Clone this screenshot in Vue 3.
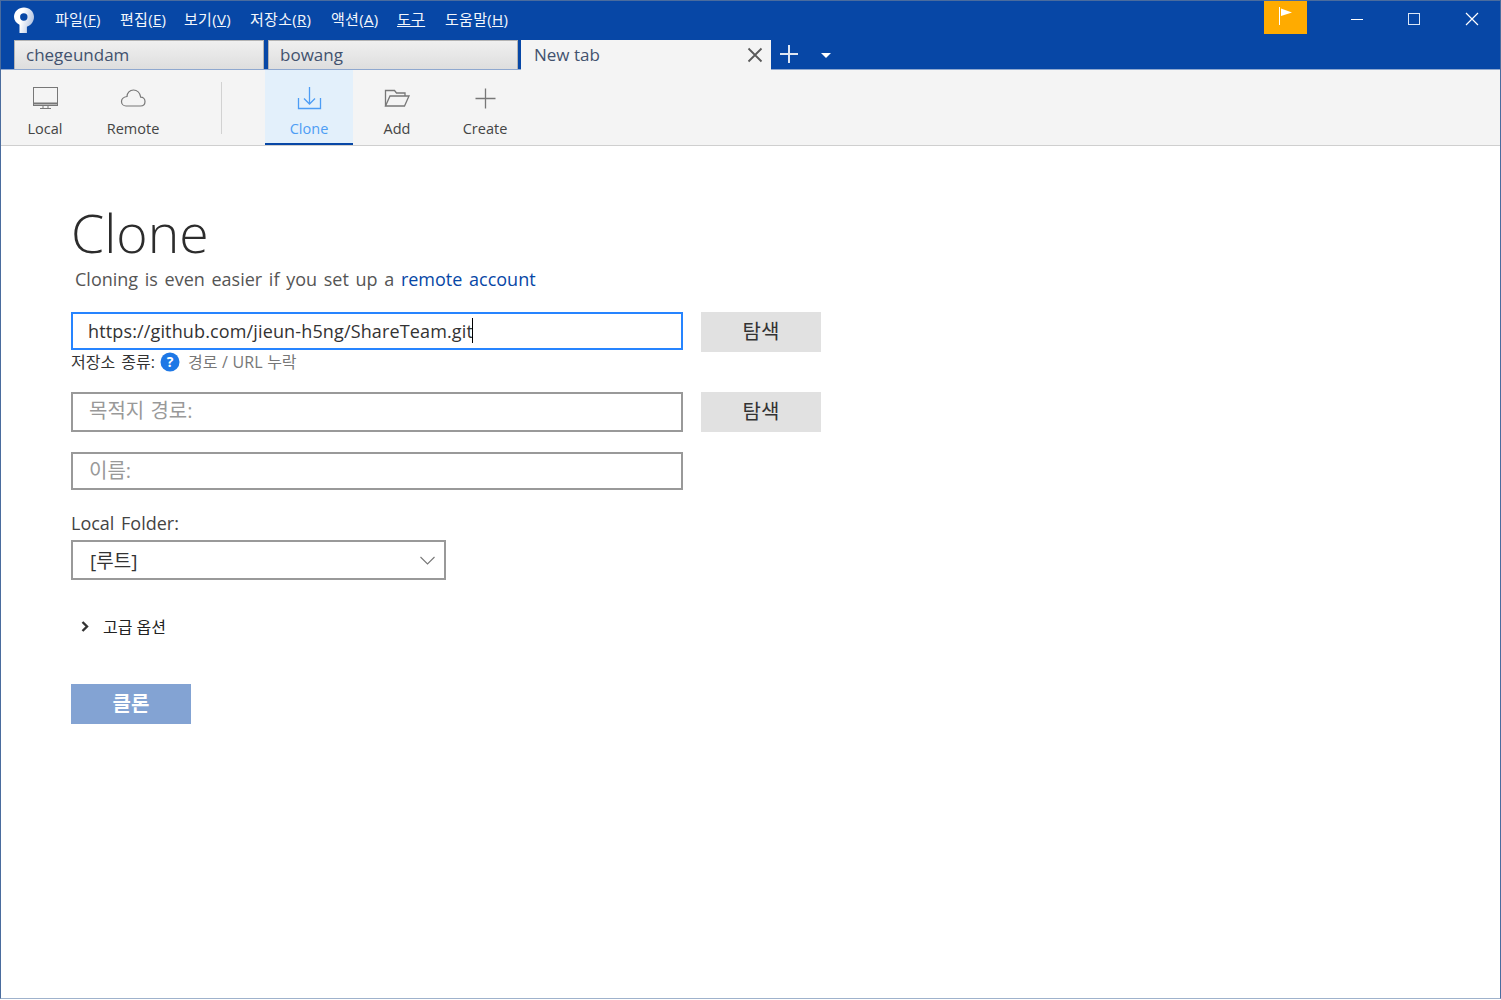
<script setup>
const menus = [
  { label: '파일', key: 'F', width: 65 },
  { label: '편집', key: 'E', width: 64 },
  { label: '보기', key: 'V', width: 66 },
  { label: '저장소', key: 'R', width: 81 },
  { label: '액션', key: 'A', width: 66 },
  { label: '도구', key: '', width: 48 },
  { label: '도움말', key: 'H', width: 70 }
]
</script>

<template>
  <div class="window">
    <header class="titlebar">
      <svg class="logo" width="22" height="26" viewBox="0 0 22 26">
        <defs>
          <linearGradient id="lg" x1="0" y1="0" x2="1" y2="0.3">
            <stop offset="0.45" stop-color="#ffffff" />
            <stop offset="1" stop-color="#b9c9e4" />
          </linearGradient>
        </defs>
        <path fill="url(#lg)" fill-rule="evenodd" d="M11 0.5C5.4 0.5 1 4.6 1 9.8c0 3.5 2.2 6.4 5.5 8V26h7.4v-6.2c4.2-1.5 7.1-5.3 7.1-10C21 4.6 16.6 0.5 11 0.5zM10.8 6.3a3.7 3.7 0 1 1 0 7.4a3.7 3.7 0 0 1 0-7.4z" />
      </svg>
      <nav class="menu">
        <span v-for="m in menus" :key="m.label" class="menu-item" :style="{ width: m.width + 'px' }">
          <template v-if="m.key">{{ m.label }}(<u>{{ m.key }}</u>)</template>
          <u v-else>{{ m.label }}</u>
        </span>
      </nav>
      <div class="flag">
        <svg width="14" height="18" viewBox="0 0 14 18">
          <path d="M0.5 0v18" stroke="#fff" stroke-width="1" fill="none" />
          <path d="M2 1.5L13 5.5L2 9z" fill="#fff" />
        </svg>
      </div>
      <div class="winbtn">
        <svg width="14" height="14" viewBox="0 0 14 14"><path d="M1 7.5h12" stroke="#fff" fill="none" /></svg>
      </div>
      <div class="winbtn">
        <svg width="14" height="14" viewBox="0 0 14 14"><rect x="0.5" y="1.5" width="11" height="11" stroke="#dce6f5" fill="none" /></svg>
      </div>
      <div class="winbtn last">
        <svg width="14" height="14" viewBox="0 0 14 14"><path d="M1 1l12 12M13 1L1 13" stroke="#fff" stroke-width="1.2" fill="none" /></svg>
      </div>
    </header>

    <div class="tabbar">
      <div class="tab">chegeundam</div>
      <div class="tab">bowang</div>
      <div class="tab active">
        <span>New tab</span>
        <svg class="tab-close" width="16" height="16" viewBox="0 0 16 16"><path d="M1.5 1.5l13 13M14.5 1.5l-13 13" stroke="#5a5a5a" stroke-width="1.8" fill="none" /></svg>
      </div>
      <svg class="tab-add" width="20" height="20" viewBox="0 0 20 20"><path d="M10 1v18M1 10h18" stroke="#dfe6f2" stroke-width="2" fill="none" /></svg>
      <svg class="tab-more" width="10" height="5" viewBox="0 0 10 5"><path d="M0 0h10L5 5z" fill="#fff" /></svg>
    </div>

    <div class="toolbar">
      <div class="tool">
        <svg class="ico" width="28" height="26" viewBox="0 0 28 26" fill="none" stroke="#777">
          <rect x="2.5" y="2.5" width="24" height="18" />
          <path d="M2 18.5h25" stroke-width="2" />
          <path d="M12 21v2.5M17 21v2.5M9 23.5h11" />
        </svg>
        <span>Local</span>
      </div>
      <div class="tool">
        <svg class="ico" width="28" height="26" viewBox="0 0 28 26" fill="none" stroke="#777" stroke-width="1.2">
          <path d="M7 21h14.5c3 0 4.5-2 4.5-4.500c0-2.500-1.800-4.300-4.300-4.300C21 8 18 5 14.500 5C10.800 5 8 8 8 11.500C5 12 2.500 13.800 2.500 16.500C2.500 19 4.500 21 7 21z" />
        </svg>
        <span>Remote</span>
      </div>
      <div class="sep"></div>
      <div class="tool selected">
        <svg class="ico" width="28" height="26" viewBox="0 0 28 26" fill="none" stroke="#4d9df5" stroke-width="1.3">
          <path d="M14.5 2v17M9 13.5l5.5 5.5l5.5-5.5" />
          <path d="M3.5 13v10.5h22V13" />
        </svg>
        <span>Clone</span>
      </div>
      <div class="tool">
        <svg class="ico" width="28" height="26" viewBox="0 0 28 26" fill="none" stroke="#777" stroke-width="1.3">
          <path d="M2.5 21V5.5h9l2 2.5h8.500v3" />
          <path d="M2.5 21L7 11h19l-4.500 10z" />
        </svg>
        <span>Add</span>
      </div>
      <div class="tool">
        <svg class="ico" width="28" height="26" viewBox="0 0 28 26" fill="none" stroke="#777" stroke-width="1.3">
          <path d="M14.5 3.500v20M4.500 13.500h20" />
        </svg>
        <span>Create</span>
      </div>
    </div>

    <main class="content">
      <h1>Clone</h1>
      <p class="sub">Cloning is even easier if you set up a <a>remote account</a></p>

      <div class="row url-row">
        <div class="field focus"><span class="value">https://github.com/jieun-h5ng/ShareTeam.git</span><i class="caret"></i></div>
        <div class="btn">탐색</div>
      </div>
      <div class="hint">
        <span class="hint-label">저장소 종류:</span>
        <svg width="20" height="20" viewBox="0 0 20 20"><circle cx="10" cy="10" r="9.5" fill="#1e78e6" /><text x="10" y="14.5" text-anchor="middle" class="q">?</text></svg>
        <span class="hint-text">경로 / URL 누락</span>
      </div>
      <div class="row dest-row">
        <div class="field"><span class="ph">목적지 경로:</span></div>
        <div class="btn">탐색</div>
      </div>
      <div class="row name-row">
        <div class="field short"><span class="ph">이름:</span></div>
      </div>

      <label class="folder-label">Local Folder:</label>
      <div class="select">
        <span>[루트]</span>
        <svg width="15" height="9" viewBox="0 0 15 9"><path d="M0.5 1l7 7l7-7" stroke="#777" stroke-width="1.1" fill="none" /></svg>
      </div>

      <div class="advanced">
        <svg width="8" height="11" viewBox="0 0 8 11"><path d="M1.5 1l4.5 4.5L1.5 10" stroke="#333" stroke-width="2.4" fill="none" /></svg>
        <span>고급 옵션</span>
      </div>

      <div class="primary">클론</div>
    </main>
  </div>
</template>

<style>
html, body { margin: 0; background: #fff; }
</style>

<style scoped>
.window {
  box-sizing: border-box;
  width: 1501px;
  height: 999px;
  border: 1px solid #4a6c9e;
  border-bottom-color: #9fb2cc;
  display: flex;
  flex-direction: column;
  background: #fff;
  font-family: "Open Sans", "Noto Sans CJK KR", sans-serif;
  overflow: hidden;
}
.titlebar {
  height: 39px;
  flex: none;
  background: #0747a6;
  display: flex;
  align-items: flex-start;
  color: #fff;
}
.logo { margin: 6px 0 0 12px; flex: none; }
.menu { display: flex; margin-left: 20px; padding-top: 8px; flex: 1; }
.menu-item { font-size: 15px; line-height: 20px; letter-spacing: 0.3px; white-space: nowrap; color: #f4f7fc; }
.flag {
  width: 43px;
  height: 33px;
  background: #ffab00;
  display: flex;
  align-items: flex-start;
  justify-content: center;
  padding-top: 6px;
  box-sizing: border-box;
  margin-right: 21px;
}
.winbtn { width: 58px; height: 36px; display: flex; align-items: center; justify-content: center; }
.winbtn.last { width: 56px; }
.tabbar {
  height: 30px;
  flex: none;
  background: #0747a6;
  box-shadow: inset 0 -1px 0 #8fa8cf;
  display: flex;
  padding-left: 13px;
  align-items: flex-start;
  gap: 4px;
}
.tab {
  box-sizing: border-box;
  width: 250px;
  height: 29px;
  background: linear-gradient(#f0f0f0, #dedede);
  border: 1px solid #b4b4b4;
  border-bottom: none;
  color: #42526e;
  font-size: 17px;
  line-height: 25px;
  padding: 0 0 2px 11px;
  display: flex;
  align-items: center;
  justify-content: space-between;
}
.tab.active {
  background: #f4f4f4;
  border: none;
  height: 30px;
  margin-left: -1px;
  padding: 0 8px 2px 13px;
}
.tab-close { margin-top: 2px; }
.tab-add { margin: 4px 0 0 4px; flex: none; }
.tab-more { margin: 13px 0 0 18px; flex: none; }
.toolbar {
  height: 76px;
  flex: none;
  box-sizing: border-box;
  background: #f4f4f4;
  border-bottom: 1px solid #cfcfcf;
  display: flex;
}
.tool {
  width: 88px;
  height: 75px;
  box-sizing: border-box;
  display: flex;
  flex-direction: column;
  align-items: center;
  padding-top: 15px;
  font-size: 14.5px;
  line-height: 20px;
}
.tool .ico { display: block; margin-bottom: 8px; }
.tool span { color: #444; }
.sep { width: 1px; height: 52px; margin: 12px 43px 0 44px; background: #d2d2d2; flex: none; }
.tool.selected { background: #e3f0fb; border-bottom: 2px solid #0747a6; }
.tool.selected span { color: #4d9df5; }
.content { padding: 53px 0 0 70px; flex: 1; }
h1 {
  margin: 0;
  font-weight: 300;
  font-size: 53.5px;
  line-height: 67px;
  color: #2c2c2c;
}
.sub { margin: 0 0 0 4px; font-size: 18px; line-height: 26px; color: #555; word-spacing: 2px; }
.sub a { color: #0747a6; }
.row { display: flex; gap: 18px; align-items: flex-start; }
.url-row { margin-top: 20px; }
.field {
  box-sizing: border-box;
  width: 612px;
  height: 40px;
  border: 2px solid #999;
  padding-left: 15px;
  font-size: 18px;
  line-height: 33px;
  display: flex;
}
.field.short { height: 38px; }
.field.focus { border-color: #2684ff; color: #333; height: 38px; line-height: 35px; }
.value { letter-spacing: 0.14px; white-space: nowrap; }
.caret { display: block; width: 1px; height: 25px; background: #000; margin: 4px 0 0 -1px; }
.ph { color: #999; padding-left: 1px; font-size: 20px; word-spacing: 1px; }
.btn {
  width: 120px;
  height: 40px;
  background: #e1e1e1;
  color: #333;
  text-align: center;
  font-size: 20px;
  line-height: 40px;
}
.hint { display: flex; align-items: center; height: 20px; font-size: 16px; gap: 5px; }
.hint-label { color: #333; word-spacing: 2px; padding-bottom: 2px; }
.hint-text { color: #777; margin-left: 3px; word-spacing: 0.5px; padding-bottom: 2px; }
.q { font-family: "Open Sans", sans-serif; font-weight: 700; font-size: 14px; fill: #fff; }
.dest-row { margin-top: 20px; }
.name-row { margin-top: 20px; }
.folder-label { display: block; margin-top: 21px; font-size: 18px; line-height: 24px; color: #444; word-spacing: 2px; }
.select {
  box-sizing: border-box;
  width: 375px;
  height: 40px;
  margin-top: 5px;
  border: 2px solid #999;
  padding: 0 9px 0 17px;
  font-size: 19px;
  color: #333;
  display: flex;
  align-items: center;
  justify-content: space-between;
}
.advanced { display: flex; align-items: center; margin: 36px 0 0 10px; height: 20px; gap: 14px; font-size: 16px; color: #222; }
.primary {
  width: 120px;
  height: 40px;
  margin-top: 48px;
  background: #83a3d3;
  color: #fff;
  font-weight: 700;
  font-size: 20px;
  line-height: 39px;
  text-align: center;
}
</style>
